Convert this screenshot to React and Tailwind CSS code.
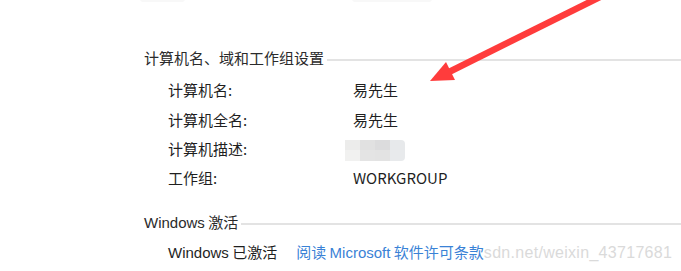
import React from 'react';

const rows = [
  { label: '计算机名:', value: '易先生' },
  { label: '计算机全名:', value: '易先生' },
  { label: '计算机描述:', value: null },
  { label: '工作组:', value: 'WORKGROUP' },
];

const cjk = { fontFamily: '"Noto Sans CJK SC", "Liberation Sans", sans-serif' };
const latin = { fontFamily: '"Liberation Sans", "Noto Sans CJK SC", sans-serif' };

const Blurred = () => (
  <div className="flex flex-col w-[60px] h-[21px] rounded-r-[4px] overflow-hidden blur-[0.6px]">
    <div className="flex h-[10px]">
      <div className="w-[15px] bg-[#ececeb]" />
      <div className="w-[15px] bg-[#e1e1e1]" />
      <div className="w-[15px] bg-[#dcdcdd]" />
      <div className="w-[15px] bg-[#e7e9eb]" />
    </div>
    <div className="flex h-[11px]">
      <div className="w-[15px] bg-[#f1f1f0]" />
      <div className="w-[15px] bg-[#e4e4e4]" />
      <div className="w-[15px] bg-[#e3e3e3]" />
      <div className="w-[15px] bg-[#e8eaec]" />
    </div>
  </div>
);

const SectionTitle = ({ children, className }) => (
  <div className={`flex items-center h-5 ${className}`}>
    <span className="text-[15px] text-[#2b2b2b] leading-5 whitespace-nowrap">{children}</span>
    <div className="flex-1 h-[2px] bg-[#e3e3e3] ml-[3px] mt-[4px]" />
  </div>
);

export default function App() {
  return (
    <div className="relative w-[681px] h-[271px] overflow-hidden bg-white" style={cjk}>
      <div className="pl-[144px] pt-[48px]">
        <SectionTitle>计算机名、域和工作组设置</SectionTitle>
        <div className="mt-2 pl-6">
          {rows.map((r) => (
            <div key={r.label} className="flex items-center h-[29.3px] text-[15px] text-[#1f1f1f]">
              <div className="w-[185px]">{r.label}</div>
              {r.value ? <div>{r.value}</div> : <div className="-ml-[8px] mt-[2px]"><Blurred /></div>}
            </div>
          ))}
        </div>
        <SectionTitle className="mt-[19px]">
          <span style={latin}>Windows</span> 激活
        </SectionTitle>
        <div className="mt-[11px] pl-6 flex items-center h-5 text-[15px] whitespace-nowrap">
          <span className="text-[#1f1f1f]">
            <span style={latin}>Windows</span> 已激活
          </span>
          <span className="ml-[19px] text-[#3a82d6]">
            阅读 <span style={latin}>Microsoft</span> 软件许可条款
          </span>
          <span className="text-[16px] text-[#dadada] tracking-[0.3px]" style={{ fontFamily: '"Liberation Sans", sans-serif' }}>
            sdn.net/weixin_43717681
          </span>
        </div>
      </div>

      <div className="absolute left-[140px] top-[-4px] w-[45px] h-[6px] bg-[#f8f8f8] rounded-sm" />
      <div className="absolute left-[352px] top-[-4px] w-[80px] h-[6px] bg-[#f8f8f8] rounded-sm" />

      <svg className="absolute left-0 top-0" width="681" height="271" viewBox="0 0 681 271">
        <line x1="449" y1="72" x2="600" y2="-3" stroke="#ff3c3c" strokeWidth="6.5" />
        <polygon points="430,81 455,80 446,62" fill="#ff3c3c" />
      </svg>
    </div>
  );
}
